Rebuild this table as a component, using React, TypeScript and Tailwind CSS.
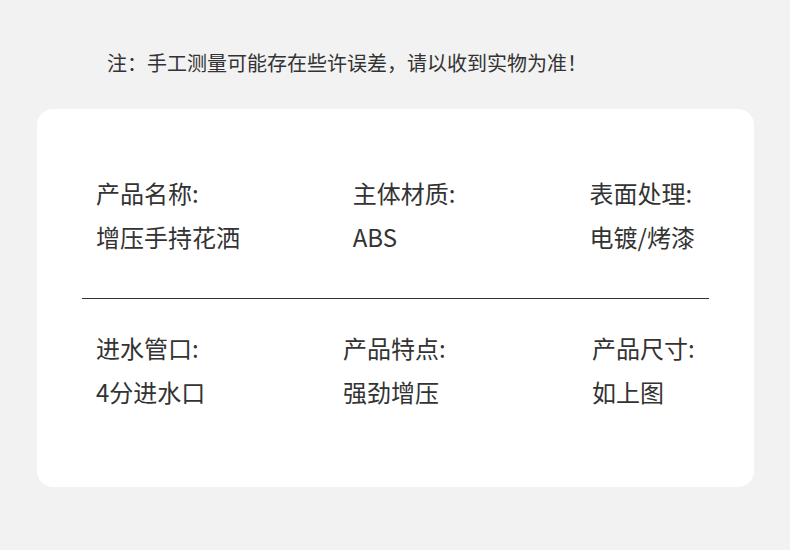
import React from 'react';

const font = { fontFamily: '"Noto Sans CJK SC", "Noto Sans", sans-serif' };

type Item = { label: string; value: string; w: string };

const rowOne: Item[] = [
  { label: '产品名称:', value: '增压手持花洒', w: 'w-[257px]' },
  { label: '主体材质:', value: 'ABS', w: 'w-[237px]' },
  { label: '表面处理:', value: '电镀/烤漆', w: 'flex-1' },
];

const rowTwo: Item[] = [
  { label: '进水管口:', value: '4分进水口', w: 'w-[247px]' },
  { label: '产品特点:', value: '强劲增压', w: 'w-[249px]' },
  { label: '产品尺寸:', value: '如上图', w: 'flex-1' },
];

const SpecRow: React.FC<{ items: Item[] }> = ({ items }) => (
  <div className="flex px-[59px]">
    {items.map((it) => (
      <div key={it.label} className={`${it.w} flex flex-col gap-[12px]`}>
        <span className="text-[24px] leading-[32px] text-[#333333] whitespace-nowrap">{it.label}</span>
        <span className="text-[24px] leading-[32px] text-[#333333] whitespace-nowrap">{it.value}</span>
      </div>
    ))}
  </div>
);

export default function App() {
  return (
    <div className="w-[790px] h-[550px] bg-[#f2f2f2] overflow-hidden" style={font}>
      {/* note */}
      <p className="pt-[49px] pl-[107px] text-[20px] leading-[28px] text-[#333333]">
        注：手工测量可能存在些许误差，请以收到实物为准！
      </p>

      {/* spec card */}
      <div className="mt-[32px] ml-[37px] w-[717px] h-[378px] bg-white rounded-[16px] pt-[68px]">
        <SpecRow items={rowOne} />
        <div className="mx-[45px] mt-[45px] mb-[33px] h-px bg-[#333333]" />
        <SpecRow items={rowTwo} />
      </div>
    </div>
  );
}
